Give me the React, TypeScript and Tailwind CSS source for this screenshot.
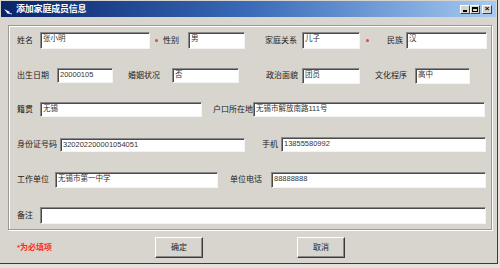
import React from "react";

const FONT = "font-['Liberation_Sans','Noto_Sans_CJK_SC',sans-serif]";

function Label({ className, children }: { className: string; children: React.ReactNode }) {
  return (
    <span className={`shrink-0 whitespace-nowrap text-[8px] leading-none text-[#222] ${className}`}>
      {children}
    </span>
  );
}

function Field({ className, value }: { className: string; value?: string }) {
  return (
    <div
      className={`shrink-0 overflow-hidden whitespace-nowrap bg-white border border-t-[#8a8a8a] border-l-[#8a8a8a] border-b-[#f4f4f4] border-r-[#f4f4f4] shadow-[inset_1px_1px_0_#4a4a4a] pl-[2px] pt-[2px] text-[7.5px] leading-none text-[#333] ${className}`}
    >
      {value}
    </div>
  );
}

function Star({ className }: { className: string }) {
  return <span className={`shrink-0 w-[3px] h-[3px] rounded-full bg-[#e04848] ${className}`} />;
}

function Button({ className, children }: { className: string; children: React.ReactNode }) {
  return (
    <div
      className={`shrink-0 w-[48px] h-[21px] flex items-center justify-center bg-[#d8d5ce] border border-t-white border-l-white border-b-[#3a3a3a] border-r-[#3a3a3a] shadow-[inset_-1px_-1px_0_#8a8a8a] text-[8px] text-[#222] ${className}`}
    >
      {children}
    </div>
  );
}

export default function App() {
  return (
    <div className={`w-[500px] h-[268px] bg-[#e4e2dc] ${FONT}`}>
      <div className="w-[498px] h-[264px] bg-[#d8d5ce] border-r border-b border-[#3c3c3c] flex flex-col">
        {/* Title bar */}
        <div className="h-[16px] mx-[1px] mt-[1px] flex items-center bg-gradient-to-r from-[#0a246a] via-[#3a6ab8] to-[#a6caf0]">
          <svg width="9" height="7" viewBox="0 0 9 7" className="ml-[3px] mt-[4px]">
            <path d="M0 1 L6 4 L4 6 Z" fill="#ffffff" />
            <path d="M4 5 L8 6" stroke="#cfd8ea" strokeWidth="1" />
          </svg>
          <span className="ml-[3px] text-[9px] font-bold leading-none text-white tracking-[-0.2px]">添加家庭成员信息</span>
          <div className="ml-auto mr-[4px] flex items-center">
            <div className="w-[10px] h-[9px] bg-[#d8d5ce] border border-t-white border-l-white border-b-[#404040] border-r-[#404040] flex items-end justify-center pb-[1px]">
              <div className="w-[4px] h-[2px] bg-black" />
            </div>
            <div className="w-[10px] h-[9px] bg-[#d8d5ce] border border-t-white border-l-white border-b-[#404040] border-r-[#404040] flex items-center justify-center">
              <div className="w-[6px] h-[5px] border border-black border-t-2" />
            </div>
            <div className="ml-[2px] w-[10px] h-[9px] bg-[#d8d5ce] border border-t-white border-l-white border-b-[#404040] border-r-[#404040] flex items-center justify-center text-[8px] font-bold leading-none text-black">
              ×
            </div>
          </div>
        </div>

        {/* Body */}
        <div className="pl-[8px] flex flex-col">
          {/* Group box */}
          <div className="mt-[8px] w-[484px] border border-[#9a9893] shadow-[inset_1px_1px_0_#ffffff,1px_1px_0_#ffffff] flex flex-col pb-[5px]">
            {/* Row 1 */}
            <div className="mt-[6px] pl-[8px] flex items-center h-[17px]">
              <Label className="w-[23px]">姓名</Label>
              <Field className="w-[110px] h-[17px]" value="张小明" />
              <Star className="ml-[5px] mr-[1px]" />
              <Label className="ml-[4px] w-[25px]">性别</Label>
              <Field className="w-[57px] h-[17px]" value="男" />
              <Label className="ml-[20px] w-[37px]">家庭关系</Label>
              <Field className="w-[58px] h-[17px]" value="儿子" />
              <Star className="ml-[6px] mr-[2px]" />
              <Label className="ml-[16px] w-[19px]">民族</Label>
              <Field className="w-[81px] h-[17px]" value="汉" />
            </div>
            {/* Row 2 */}
            <div className="mt-[19px] pl-[8px] flex items-center h-[15px]">
              <Label className="w-[40px]">出生日期</Label>
              <Field className="w-[56px] h-[15px]" value="20000105" />
              <Label className="ml-[15px] w-[44px]">婚姻状况</Label>
              <Field className="w-[67px] h-[15px]" value="否" />
              <Label className="ml-[27px] w-[36px]">政治面貌</Label>
              <Field className="w-[58px] h-[16px]" value="团员" />
              <Label className="ml-[15px] w-[40px]">文化程序</Label>
              <Field className="w-[55px] h-[16px]" value="高中" />
            </div>
            {/* Row 3 */}
            <div className="mt-[19px] pl-[8px] flex items-center h-[15px]">
              <Label className="w-[23px]">籍贯</Label>
              <Field className="w-[162px] h-[15px]" value="无锡" />
              <Label className="ml-[11px] w-[40px]">户口所在地</Label>
              <Field className="w-[232px] h-[15px]" value="无锡市解放南路111号" />
            </div>
            {/* Row 4 */}
            <div className="mt-[20px] pl-[8px] flex items-center h-[15px]">
              <Label className="w-[43px]">身份证号码</Label>
              <Field className="w-[185px] h-[14px]" value="320202200001054051" />
              <Label className="ml-[17px] w-[19px]">手机</Label>
              <Field className="w-[205px] h-[15px]" value="13855580992" />
            </div>
            {/* Row 5 */}
            <div className="mt-[20px] pl-[8px] flex items-center h-[16px]">
              <Label className="w-[38px]">工作单位</Label>
              <Field className="w-[163px] h-[16px]" value="无锡市第一中学" />
              <Label className="ml-[12px] w-[41px]">单位电话</Label>
              <Field className="w-[215px] h-[16px]" value="88888888" />
            </div>
            {/* Row 6 */}
            <div className="mt-[19px] pl-[8px] flex items-center h-[17px]">
              <Label className="w-[23px]">备注</Label>
              <Field className="w-[446px] h-[17px]" />
            </div>
          </div>

          {/* Bottom row */}
          <div className="mt-[7px] pl-[9px] flex items-center h-[21px]">
            <span className="w-[138px] shrink-0 text-[8px] leading-none text-[#ff2a2a] font-bold">*为必填项</span>
            <Button className="">确定</Button>
            <Button className="ml-[94px]">取消</Button>
          </div>
        </div>
      </div>
    </div>
  );
}
